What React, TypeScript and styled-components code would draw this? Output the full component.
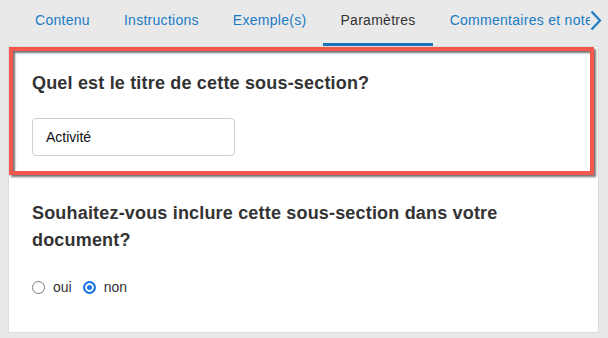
import React, { useState } from "react";
import styled, { createGlobalStyle } from "styled-components";

const GlobalStyle = createGlobalStyle`
	html, body {
		margin: 0;
		padding: 0;
		background: #e9e9e9;
		font-family: "Liberation Sans", Arial, sans-serif;
	}
	* {
		box-sizing: border-box;
	}
`;

const Page = styled.div`
	width: 608px;
	height: 338px;
	overflow: hidden;
	background: #e9e9e9;
`;

const Nav = styled.nav`
	display: flex;
	height: 46px;
`;

const TabList = styled.div`
	display: flex;
	flex: 1;
	min-width: 0;
	overflow: hidden;
	padding-left: 18px;
	white-space: nowrap;
`;

const Tab = styled.button<{ $active?: boolean }>`
	flex-shrink: 0;
	height: 46px;
	padding: 0 17px 3px;
	border: none;
	border-bottom: 3px solid ${({ $active }) => ($active ? "#1a73b9" : "transparent")};
	background: none;
	font-family: inherit;
	font-size: 14px;
	letter-spacing: 0.28px;
	line-height: 20px;
	color: ${({ $active }) => ($active ? "#333" : "#1b7bc4")};
	cursor: pointer;
`;

const NextButton = styled.button`
	display: flex;
	align-items: flex-start;
	width: 18px;
	padding: 10px 0 0 0;
	border: none;
	background: none;
	color: #1b7bc4;
`;

const Card = styled.div`
	margin: 0 9px 0 8px;
	height: 287px;
	background: #fff;
	border: 1px solid #dcdcdc;
`;

const HighlightSection = styled.section`
	margin-right: 4px;
	padding: 19px 19px 15px;
	border: 4px solid #f4574b;
	box-shadow: 2px 2px 2px rgba(0, 0, 0, 0.55), inset 2px 2px 2px rgba(0, 0, 0, 0.55);
`;

const Section = styled.section`
	padding: 25px 23px 0;
`;

const Question = styled.h2`
	margin: 0;
	font-size: 18px;
	letter-spacing: 0.18px;
	line-height: 27px;
	font-weight: 700;
	color: #333;
`;

const TextInput = styled.input`
	display: block;
	width: 203px;
	height: 38px;
	margin-top: 21px;
	padding: 0 13px;
	border: 1px solid #cfcfcf;
	border-radius: 4px;
	font-family: inherit;
	font-size: 14px;
	color: #111;
	outline: none;
`;

const Options = styled.div`
	display: flex;
	align-items: center;
	gap: 11px;
	margin-top: 23px;
`;

const Option = styled.label`
	display: flex;
	align-items: center;
	gap: 8px;
	font-size: 14px;
	line-height: 20px;
	color: #333;
`;

const Radio = styled.input`
	appearance: none;
	width: 13px;
	height: 13px;
	margin: 0;
	border: 1px solid #7a7a7a;
	border-radius: 50%;
	background: #fff;

	&:checked {
		border: 2px solid #1a73e8;
		background: #1a73e8;
		box-shadow: inset 0 0 0 2px #fff;
	}
`;

const tabs = ["Contenu", "Instructions", "Exemple(s)", "Paramètres", "Commentaires et notes"];

export default function App() {
	const [choice, setChoice] = useState("non");

	return (
		<Page>
			<GlobalStyle />
			<Nav>
				<TabList>
					{tabs.map((t) => (
						<Tab key={t} $active={t === "Paramètres"}>
							{t}
						</Tab>
					))}
				</TabList>
				<NextButton aria-label="Suivant">
					<svg width="12" height="21" viewBox="0 0 12 21">
						<path d="M1.5 1.5 L10 10.5 L1.5 19.5" fill="none" stroke="currentColor" strokeWidth="2.2" />
					</svg>
				</NextButton>
			</Nav>
			<Card>
				<HighlightSection>
					<Question>Quel est le titre de cette sous-section?</Question>
					<TextInput defaultValue="Activité" />
				</HighlightSection>
				<Section>
					<Question>Souhaitez-vous inclure cette sous-section dans votre document?</Question>
					<Options>
						<Option>
							<Radio type="radio" name="inclure" checked={choice === "oui"} onChange={() => setChoice("oui")} />
							oui
						</Option>
						<Option>
							<Radio type="radio" name="inclure" checked={choice === "non"} onChange={() => setChoice("non")} />
							non
						</Option>
					</Options>
				</Section>
			</Card>
		</Page>
	);
}
